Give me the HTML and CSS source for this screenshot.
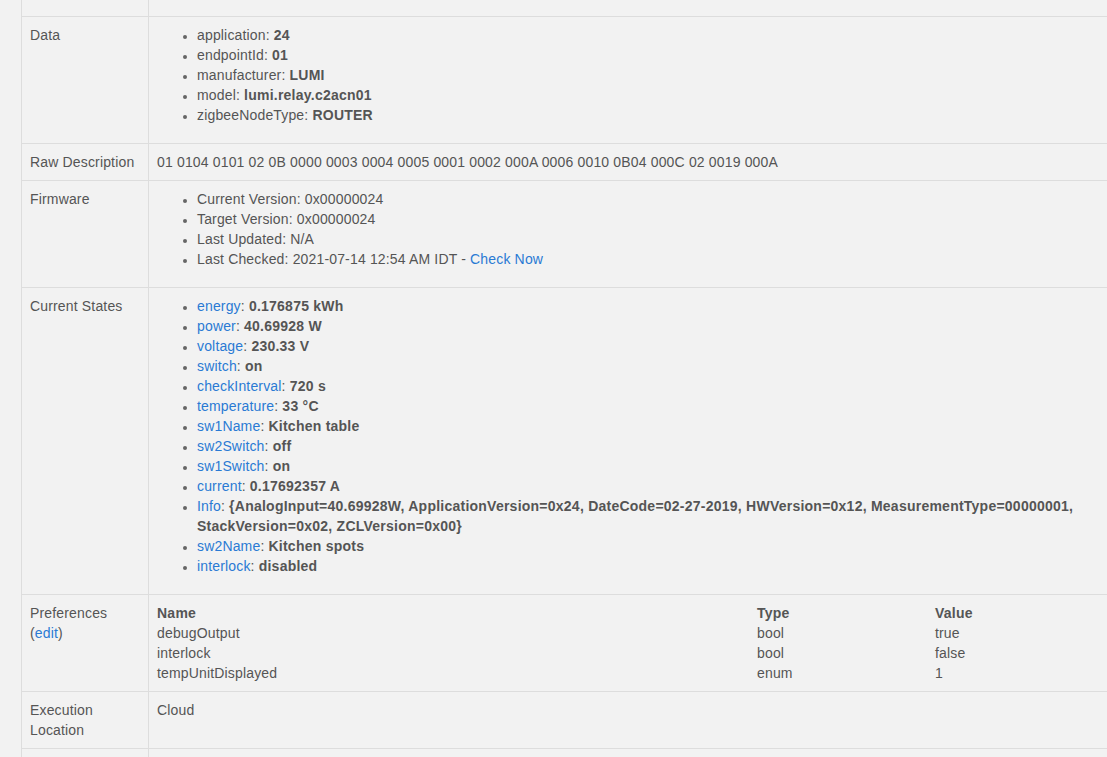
FILE: index.html
```html
<!DOCTYPE html>
<html>
<head>
<meta charset="utf-8">
<link rel="stylesheet" href="styles.css">
</head>
<body>
<div class="page">
<table class="details">
  <colgroup><col class="c-label"><col class="c-value"></colgroup>
  <tr class="top-row"><td></td><td></td></tr>
  <tr>
    <td>Data</td>
    <td>
      <ul>
        <li>application: <b>24</b></li>
        <li>endpointId: <b>01</b></li>
        <li>manufacturer: <b>LUMI</b></li>
        <li>model: <b>lumi.relay.c2acn01</b></li>
        <li>zigbeeNodeType: <b>ROUTER</b></li>
      </ul>
    </td>
  </tr>
  <tr>
    <td>Raw Description</td>
    <td>01 0104 0101 02 0B 0000 0003 0004 0005 0001 0002 000A 0006 0010 0B04 000C 02 0019 000A</td>
  </tr>
  <tr>
    <td>Firmware</td>
    <td>
      <ul>
        <li>Current Version: 0x00000024</li>
        <li>Target Version: 0x00000024</li>
        <li>Last Updated: N/A</li>
        <li>Last Checked: 2021-07-14 12:54 AM IDT - <a href="#">Check Now</a></li>
      </ul>
    </td>
  </tr>
  <tr>
    <td>Current States</td>
    <td>
      <ul>
        <li><a href="#">energy</a>: <b>0.176875 kWh</b></li>
        <li><a href="#">power</a>: <b>40.69928 W</b></li>
        <li><a href="#">voltage</a>: <b>230.33 V</b></li>
        <li><a href="#">switch</a>: <b>on</b></li>
        <li><a href="#">checkInterval</a>: <b>720 s</b></li>
        <li><a href="#">temperature</a>: <b>33 °C</b></li>
        <li><a href="#">sw1Name</a>: <b>Kitchen table</b></li>
        <li><a href="#">sw2Switch</a>: <b>off</b></li>
        <li><a href="#">sw1Switch</a>: <b>on</b></li>
        <li><a href="#">current</a>: <b>0.17692357 A</b></li>
        <li><a href="#">Info</a>: <b>{AnalogInput=40.69928W, ApplicationVersion=0x24, DateCode=02-27-2019, HWVersion=0x12, MeasurementType=00000001, StackVersion=0x02, ZCLVersion=0x00}</b></li>
        <li><a href="#">sw2Name</a>: <b>Kitchen spots</b></li>
        <li><a href="#">interlock</a>: <b>disabled</b></li>
      </ul>
    </td>
  </tr>
  <tr>
    <td>Preferences<br>(<a href="#">edit</a>)</td>
    <td>
      <table class="prefs">
        <colgroup><col class="p-name"><col class="p-type"><col class="p-value"></colgroup>
        <tr><th>Name</th><th>Type</th><th>Value</th></tr>
        <tr><td>debugOutput</td><td>bool</td><td>true</td></tr>
        <tr><td>interlock</td><td>bool</td><td>false</td></tr>
        <tr><td>tempUnitDisplayed</td><td>enum</td><td>1</td></tr>
      </table>
    </td>
  </tr>
  <tr>
    <td>Execution Location</td>
    <td>Cloud</td>
  </tr>
  <tr class="bottom-row"><td>&nbsp;</td><td>&nbsp;</td></tr>
</table>
</div>
</body>
</html>
```

FILE: styles.css
```css
html, body {
  margin: 0;
  padding: 0;
  background: #f2f2f2;
  overflow: hidden;
}
body {
  font-family: "Liberation Sans", Arial, sans-serif;
  font-size: 14px;
  line-height: 20px;
  color: #555555;
  letter-spacing: 0.16px;
}
.page {
  padding-left: 21px;
}
.details {
  border-collapse: collapse;
  table-layout: fixed;
  width: 1087px;
}
.c-label { width: 127px; }
.details > tbody > tr > td {
  border: 1px solid #dddddd;
  border-right: none;
  padding: 8px;
  vertical-align: top;
}
.details > tbody > tr.top-row > td {
  border-top: none;
  padding: 0;
  height: 16px;
}
ul {
  margin: 0 0 10px 0;
  padding-left: 40px;
}
li { list-style: disc; }
li::marker { color: #666666; font-size: 12px; }
b, th {
  font-weight: bold;
  letter-spacing: 0.24px;
}
a {
  color: #2a7ad4;
  text-decoration: none;
}
.prefs {
  border-collapse: collapse;
  table-layout: fixed;
  width: 100%;
}
.p-name { width: 600px; }
.p-type { width: 178px; }
.prefs th, .prefs td {
  padding: 0;
  text-align: left;
  border: none;
}
```
